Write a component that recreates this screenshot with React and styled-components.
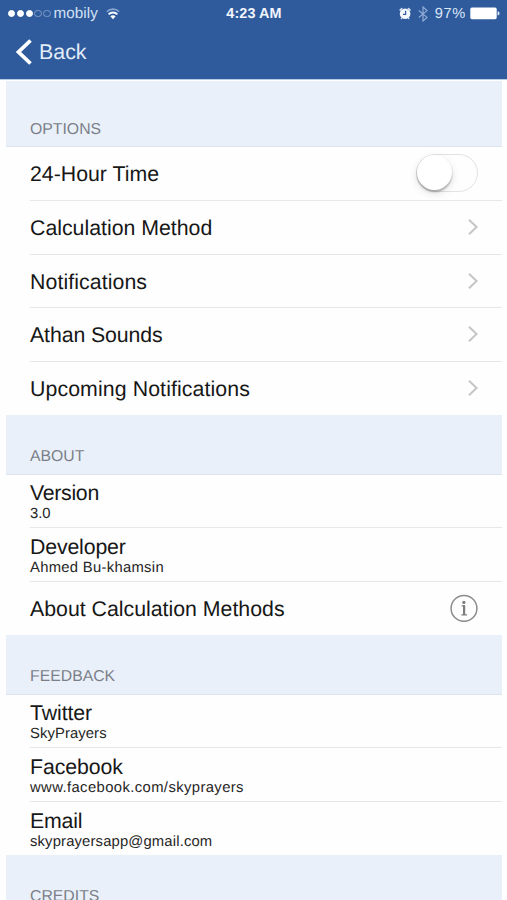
import styled, { createGlobalStyle } from "styled-components";
import { useState } from "react";

const GlobalStyle = createGlobalStyle`
  * {
    box-sizing: border-box;
  }
  body {
    margin: 0;
    background-color: #fefefe;
    font-family: "Liberation Sans", Arial, sans-serif;
    text-rendering: geometricPrecision;
  }
`;
const Container = styled.div`
  height: 900px;
  width: 100%;
  overflow: hidden;
`;
const Header = styled.header`
  height: 79px;
  background-color: #2f5b9c;
  color: #f1f5fc;
  box-shadow: 0 1px 0 #b5cce6;
`;
const StatusBar = styled.div`
  display: grid;
  grid-template-columns: 1fr auto 1fr;
  align-items: center;
  height: 27px;
  padding: 0 7px 0 8px;
`;
const StatusGroup = styled.div`
  display: flex;
  align-items: center;
  justify-content: ${(props) => (props.$end ? "flex-end" : "flex-start")};
`;
const Dots = styled.div`
  display: flex;
  gap: 1.4px;
  margin-right: 3px;
`;
const Dot = styled.span`
  width: 7.4px;
  height: 7.4px;
  border-radius: 50%;
  border: 1px solid ${(props) => (props.$on ? "#fff" : "#809dcb")};
  background-color: ${(props) => (props.$on ? "#fff" : "transparent")};
`;
const Carrier = styled.span`
  font-size: 15.2px;
  letter-spacing: 0.1px;
  line-height: 18px;
  padding-top: 1px;
  margin-right: 8px;
  color: #d3e0f5;
`;
const Time = styled.span`
  font-size: 14.4px;
  font-weight: bold;
  line-height: 18px;
  letter-spacing: 0.1px;
  padding-top: 1px;
`;
const Percent = styled.span`
  font-size: 14.6px;
  letter-spacing: 0.7px;
  line-height: 18px;
  padding-top: 1px;
  margin: 0 4px 0 7px;
  color: #dce7f8;
`;
const BackButton = styled.button`
  all: unset;
  display: flex;
  align-items: center;
  gap: 6px;
  height: 50px;
  padding-left: 16px;
  font-size: 21.4px;
  color: #e3ecf9;
  cursor: pointer;
`;
const List = styled.main`
  margin: 2px 5px 0 6px;
`;
const SectionTitle = styled.h2`
  display: flex;
  align-items: flex-end;
  height: ${(props) => (props.$first ? "66.4px" : "59.2px")};
  margin: 0;
  padding: 0 0 6.4px 24px;
  border-bottom: 1px solid #dee4ec;
  background-color: #e9f0fa;
  color: #7b7f88;
  font-size: 15.8px;
  font-weight: normal;
  line-height: 20px;
`;
const Rows = styled.div`
  padding-left: 24px;
`;
const Row = styled.div`
  display: flex;
  align-items: center;
  justify-content: space-between;
  height: 53.6px;
  padding-right: 24px;
  border-bottom: 1px solid #e7e7e9;
  &:last-child {
    border-bottom-color: transparent;
  }
`;
const Label = styled.div`
  color: #171717;
  font-size: 21.3px;
  letter-spacing: ${(props) => props.$spacing || 0}px;
  line-height: 24px;
  white-space: nowrap;
`;
const Detail = styled.div`
  color: #262626;
  font-size: 14.8px;
  letter-spacing: ${(props) => props.$spacing || 0}px;
  line-height: 18px;
`;
const Texts = styled.div`
  padding-top: ${(props) => (props.$double ? "3px" : "1.6px")};
`;
const Toggle = styled.button`
  all: unset;
  box-sizing: border-box;
  display: flex;
  justify-content: ${(props) => (props.$on ? "flex-end" : "flex-start")};
  width: 62px;
  height: 38px;
  margin-bottom: 1px;
  border: 1.5px solid #e3e3e3;
  border-radius: 19px;
  background-color: ${(props) => (props.$on ? "#4cd964" : "#fefefe")};
  cursor: pointer;
`;
const Knob = styled.span`
  width: 35px;
  height: 35px;
  border-radius: 50%;
  background-color: #fff;
  box-shadow: 0 2px 2px rgba(0, 0, 0, 0.28), 0 3px 8px rgba(0, 0, 0, 0.12);
`;

const Wifi = () => (
  <svg width='14' height='12' viewBox='0 0 14 12' fill='none'>
    <path d='M0.8 3.8C4.3 0.2 9.7 0.2 13.2 3.8' stroke='#86a5d3' strokeWidth='1.6' />
    <path d='M2.6 6.4C5.1 4 8.9 4 11.4 6.4' stroke='#f4f8ff' strokeWidth='2' />
    <path d='M4.3 8.3C5.9 7 8.1 7 9.7 8.3L7 11.2Z' fill='#fff' />
  </svg>
);

const Alarm = () => (
  <svg width='14' height='13' viewBox='0 0 14 13' fill='none'>
    <path d='M1.1 3.1L2.8 1.5M11.1 3.1L9.4 1.5' stroke='#dfe8f7' strokeWidth='1.5' strokeLinecap='round' />
    <path d='M2.8 11L2 12.2M9.4 11L10.2 12.2' stroke='#dfe8f7' strokeWidth='1.2' />
    <circle cx='6.1' cy='6.8' r='5.3' fill='#f3f7fe' />
    <path d='M6.6 3.8V7.4H4' stroke='#2f5b9c' strokeWidth='1.2' />
  </svg>
);

const Bluetooth = () => (
  <svg width='10' height='16' viewBox='0 0 10 16' fill='none'>
    <path d='M0.8 4.5L9 11.4L5 15V1L9 4.6L0.8 11.5' stroke='#8fabd6' strokeWidth='1.2' />
  </svg>
);

const Battery = () => (
  <svg width='30' height='13' viewBox='0 0 30 13'>
    <rect x='0.3' y='0.6' width='26.4' height='11.6' rx='1.6' fill='#fff' />
    <path d='M27.6 4.3C30.2 4.8 30.2 8 27.6 8.5Z' fill='#dce7f8' />
  </svg>
);

const BackArrow = () => (
  <svg width='17' height='26' viewBox='0 0 17 26' fill='none'>
    <path d='M14.5 1.5L2.5 13L14.5 24.5' stroke='#fff' strokeWidth='3.8' />
  </svg>
);

const Chevron = () => (
  <svg width='10' height='18' viewBox='0 0 10 18' fill='none'>
    <path d='M1 1.8L8.6 9L1 16.2' stroke='#c5c5c8' strokeWidth='2' />
  </svg>
);

const Info = () => (
  <svg width='28' height='28' viewBox='0 0 28 28' fill='none'>
    <circle cx='14' cy='14.4' r='12.9' stroke='#8c8c8c' strokeWidth='1.5' />
    <circle cx='13.9' cy='8.4' r='1.6' fill='#7d7d7d' />
    <path d='M11.6 11.9H14.4V20.9M11.4 20.9H17' stroke='#7d7d7d' strokeWidth='1.2' />
    <path d='M14.1 11.4V21' stroke='#7d7d7d' strokeWidth='2.2' />
  </svg>
);

const sections = [
  {
    title: "OPTIONS",
    rows: [
      { label: "24-Hour Time", type: "toggle" },
      { label: "Calculation Method", type: "link" },
      { label: "Notifications", type: "link", spacing: 0.08 },
      { label: "Athan Sounds", type: "link", spacing: -0.1 },
      { label: "Upcoming Notifications", type: "link", spacing: 0.1 },
    ],
  },
  {
    title: "ABOUT",
    rows: [
      { label: "Version", detail: "3.0", spacing: -0.3 },
      { label: "Developer", detail: "Ahmed Bu-khamsin", spacing: -0.15, detailSpacing: 0.3 },
      { label: "About Calculation Methods", type: "info" },
    ],
  },
  {
    title: "FEEDBACK",
    rows: [
      { label: "Twitter", detail: "SkyPrayers", spacing: -0.1, detailSpacing: 0.1 },
      { label: "Facebook", detail: "www.facebook.com/skyprayers", spacing: -0.1, detailSpacing: 0.4 },
      { label: "Email", detail: "skyprayersapp@gmail.com", spacing: -0.2, detailSpacing: 0.16 },
    ],
  },
  { title: "CREDITS", rows: [] },
];

const App = () => {
  const [is24Hour, setIs24Hour] = useState(false);

  return (
    <Container>
      <GlobalStyle />
      <Header>
        <StatusBar>
          <StatusGroup>
            <Dots>
              {[1, 2, 3, 4, 5].map((n) => (
                <Dot key={n} $on={n <= 3} />
              ))}
            </Dots>
            <Carrier>mobily</Carrier>
            <Wifi />
          </StatusGroup>
          <Time>4:23 AM</Time>
          <StatusGroup $end>
            <Alarm />
            <span>&nbsp;</span>
            <Bluetooth />
            <Percent>97%</Percent>
            <Battery />
          </StatusGroup>
        </StatusBar>
        <BackButton>
          <BackArrow />
          Back
        </BackButton>
      </Header>
      <List>
        {sections.map((section, i) => (
          <section key={section.title}>
            <SectionTitle $first={i === 0}>{section.title}</SectionTitle>
            <Rows>
              {section.rows.map((row) => (
                <Row key={row.label}>
                  <Texts $double={!!row.detail}>
                    <Label $spacing={row.spacing}>{row.label}</Label>
                    {row.detail && <Detail $spacing={row.detailSpacing}>{row.detail}</Detail>}
                  </Texts>
                  {row.type === "toggle" && (
                    <Toggle $on={is24Hour} onClick={() => setIs24Hour(!is24Hour)}>
                      <Knob />
                    </Toggle>
                  )}
                  {row.type === "link" && <Chevron />}
                  {row.type === "info" && <Info />}
                </Row>
              ))}
            </Rows>
          </section>
        ))}
      </List>
    </Container>
  );
};

export default App;
